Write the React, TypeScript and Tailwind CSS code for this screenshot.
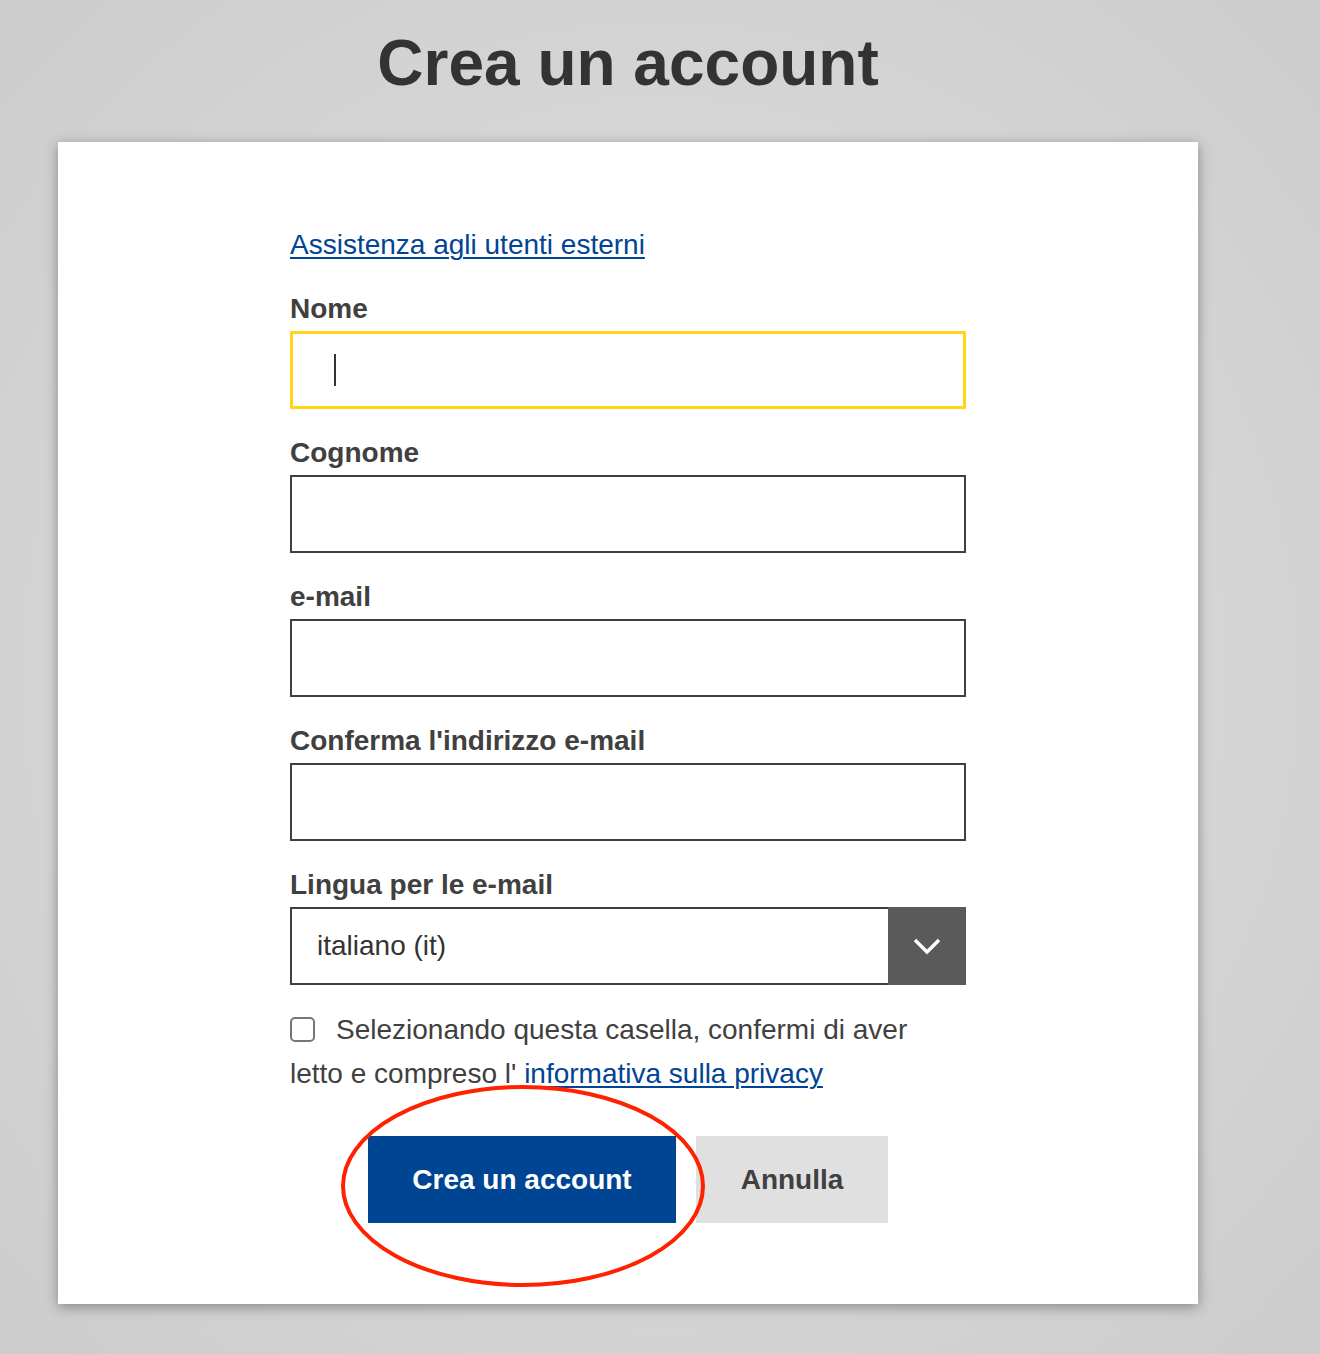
import React from "react";

const FIELDS = ["Cognome", "e-mail", "Conferma l'indirizzo e-mail"];

function Label({ children }: { children: React.ReactNode }) {
  return (
    <p className="mb-1 text-[28px] font-bold leading-[36px] text-[#404040]">{children}</p>
  );
}

function TextField({ label }: { label: string }) {
  return (
    <div className="mt-[26px]">
      <Label>{label}</Label>
      <div className="h-[78px] border-2 border-[#404040] bg-white" />
    </div>
  );
}

export default function App() {
  return (
    <div className="min-h-[1354px] bg-[radial-gradient(ellipse_at_center,#dddddd_0%,#d6d6d6_55%,#cccccc_100%)] pt-[31px] font-['Liberation_Sans',Arial,sans-serif]">
      <h1 className="ml-[58px] w-[1140px] text-center text-[64px] font-bold leading-none text-[#333333]">
        Crea un account
      </h1>

      <div className="ml-[58px] mt-[47px] w-[1140px] bg-white pb-[81px] pt-[87px] shadow-[0_3px_12px_rgba(0,0,0,0.35)]">
        <div className="mx-auto w-[676px]">
          <a
            href="#"
            className="block text-[28px] leading-[32px] text-[#004494] underline decoration-[1.5px] underline-offset-[3px]"
          >
            Assistenza agli utenti esterni
          </a>

          <div className="mt-[30px]">
            <Label>Nome</Label>
            <div className="flex h-[78px] items-center border-[3px] border-[#ffd617] bg-white pl-[41px]">
              <span className="block h-[32px] w-[2px] bg-[#333333]" />
            </div>
          </div>

          {FIELDS.map((f) => (
            <TextField key={f} label={f} />
          ))}

          <div className="mt-[26px]">
            <Label>Lingua per le e-mail</Label>
            <div className="flex h-[78px] border-2 border-[#404040] bg-white">
              <div className="flex flex-1 items-center pl-[25px] text-[28px] text-[#333333]">
                italiano (it)
              </div>
              <div className="-my-[2px] -mr-[2px] flex w-[78px] items-center justify-center bg-[#5a5a5a]">
                <svg width="28" height="18" viewBox="0 0 28 18" fill="none">
                  <path d="M2 3l12 12L26 3" stroke="#ffffff" strokeWidth="3.5" />
                </svg>
              </div>
            </div>
          </div>

          <p className="mt-[23px] text-[28px] leading-[44px] text-[#404040]">
            <span className="mr-[21px] inline-block h-[25px] w-[25px] rounded-[5px] border-2 border-[#767676] bg-white align-[-3px]" />
            Selezionando questa casella, confermi di aver
            <br />
            letto e compreso l'
            <a href="#" className="text-[#004494] underline decoration-[1.5px] underline-offset-[3px]">
              {" "}
              informativa sulla privacy
            </a>
          </p>

          <div className="mt-[40px] flex justify-center gap-5">
            <div className="relative">
              <button className="h-[87px] w-[308px] bg-[#004494] text-[28px] font-bold text-white">
                Crea un account
              </button>
              <svg
                className="pointer-events-none absolute left-[-29px] top-[-52px]"
                width="368"
                height="205"
                viewBox="0 0 368 205"
                fill="none"
              >
                <ellipse cx="184" cy="102" rx="180" ry="99" stroke="#ff2200" strokeWidth="4" />
              </svg>
            </div>
            <button className="h-[87px] w-[192px] bg-[#e0e0e0] text-[28px] font-bold text-[#404040]">
              Annulla
            </button>
          </div>
        </div>
      </div>
    </div>
  );
}
